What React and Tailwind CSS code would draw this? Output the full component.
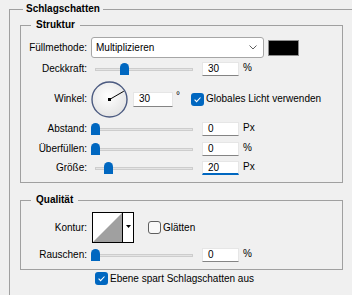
import React from "react";

const TRACK_START = 4;
const TRACK_W = 98;

const Thumb = () => (
  <svg width="9" height="12" viewBox="0 0 9 12" className="block">
    <path d="M0 4.5 A4.5 4.5 0 0 1 9 4.5 V12 H0 Z" fill="#0067c0" />
  </svg>
);

// pos = 0..1 along the track
const Slider = ({ pos }) => (
  <div className="relative w-[102px] h-[14px] flex items-center">
    <div className="ml-[4px] w-[98px] h-[3px] bg-[#e4e4e4] border border-[#cdcdcd]" />
    <div
      className="absolute top-[1px]"
      style={{ left: TRACK_START + pos * TRACK_W - 4.5 }}
    >
      <Thumb />
    </div>
  </div>
);

const NumBox = ({ value, focused, wide }) => (
  <div
    className={`${wide ? "w-[40px] h-[15px]" : "w-[37px] h-[14px]"} bg-white border border-[#e6e6e6] ${
      focused ? "border-b-2 border-b-[#0067c0]" : "border-b-[#848484]"
    } pl-[5px] flex items-center leading-none`}
  >
    {value}
  </div>
);

const Unit = ({ children }) => (
  <span className="ml-[4px] self-start leading-[12px]">{children}</span>
);

const Check = ({ checked }) =>
  checked ? (
    <div className="w-[13px] h-[13px] rounded-[3px] bg-[#0067c0] flex items-center justify-center shrink-0">
      <svg width="9" height="9" viewBox="0 0 9 9">
        <path d="M1.6 4.7 L3.6 6.7 L7.5 2.5" fill="none" stroke="#fff" strokeWidth="1.1" />
      </svg>
    </div>
  ) : (
    <div className="w-[13px] h-[13px] rounded-[3px] border border-[#5f5f5f] bg-[#f9f9f9] shrink-0" />
  );

const Row = ({ label, className, children }) => (
  <div className={`flex items-center ${className}`}>
    <div className="w-[66px] text-right whitespace-nowrap">{label}</div>
    <div className="ml-[4px] flex items-center">{children}</div>
  </div>
);

const SliderRow = ({ label, pos, value, unit, focused, className }) => (
  <Row label={label} className={className}>
    <Slider pos={pos} />
    <div className="ml-[9px] flex items-center">
      <NumBox value={value} focused={focused} />
      <Unit>{unit}</Unit>
    </div>
  </Row>
);

const Dial = () => {
  const a = (30 * Math.PI) / 180;
  return (
    <svg width="37" height="37" viewBox="0 0 37 37" className="block">
      <defs>
        <radialGradient id="dialFill" cx="45%" cy="40%" r="65%">
          <stop offset="0" stopColor="#ffffff" />
          <stop offset="1" stopColor="#e2e2e2" />
        </radialGradient>
      </defs>
      <circle cx="18.5" cy="18.5" r="17.5" fill="url(#dialFill)" stroke="#4b5a80" strokeWidth="1.4" />
      <line
        x1="18.5"
        y1="18.5"
        x2={18.5 + 16.5 * Math.cos(a)}
        y2={18.5 - 16.5 * Math.sin(a)}
        stroke="#000"
        strokeWidth="1"
      />
      <rect x="17" y="17" width="3" height="3" fill="#000" />
    </svg>
  );
};

const Contour = () => (
  <div className="ml-[1px] w-[42px] h-[31px] border border-black bg-white flex">
    <svg width="29" height="29" viewBox="0 0 29 29" className="block">
      <polygon points="0,29 29,0 29,29" fill="#a0a0a0" />
    </svg>
    <div className="w-[11px] border-l border-black flex items-center justify-center">
      <svg width="5" height="3" viewBox="0 0 5 3" className="block -mt-[2px]">
        <polygon points="0,0 5,0 2.5,3" fill="#000" />
      </svg>
    </div>
  </div>
);

export default function App() {
  return (
    <div className="w-[352px] h-[295px] overflow-hidden bg-[#f0f0f0] text-black text-[10px] leading-[12px] font-['Liberation_Sans',sans-serif] pt-[3px]">
      <fieldset className="ml-[9px] w-[400px] border border-[#a0a0a0] pl-[10px] pb-[20px]">
        <legend className="ml-[3px] px-[3px] font-bold">Schlagschatten</legend>

        <fieldset className="mt-[4px] w-[323px] border border-[#a0a0a0] pb-[7px]">
          <legend className="ml-[10px] px-[5px] font-bold">Struktur</legend>

          <Row label="Füllmethode:" className="mt-[6px] h-[21px]">
            <div className="w-[173px] h-[21px] bg-white border border-[#a6a6a6] rounded-[3px] flex items-center justify-between pl-[4px] pr-[6px]">
              <span>Multiplizieren</span>
              <svg width="8" height="5" viewBox="0 0 8 5" className="block">
                <path d="M0.5 0.5 L4 4 L7.5 0.5" fill="none" stroke="#606060" strokeWidth="1" />
              </svg>
            </div>
            <div className="ml-[4px] w-[31px] h-[16px] bg-black border border-[#8c8c8c]" />
          </Row>

          <SliderRow label="Deckkraft:" pos={0.3} value="30" unit="%" className="mt-[4px] h-[14px]" />

          <Row label="Winkel:" className="mt-[5px] h-[36px]">
            <Dial />
            <div className="ml-[5px] flex items-center">
              <NumBox value="30" wide />
              <span className="ml-[3px] self-start -mt-[2px]">°</span>
            </div>
            <div className="ml-[11px] flex items-center">
              <Check checked />
              <span className="ml-[2px] whitespace-nowrap">Globales Licht verwenden</span>
            </div>
          </Row>

          <SliderRow label="Abstand:" pos={0} value="0" unit="Px" className="mt-[5px] h-[14px]" />
          <SliderRow label="Überfüllen:" pos={0} value="0" unit="%" className="mt-[6px] h-[14px]" />
          <SliderRow label="Größe:" pos={0.14} value="20" unit="Px" focused className="mt-[5px] h-[14px]" />
        </fieldset>

        <fieldset className="mt-[11px] w-[323px] border border-[#a0a0a0] pb-[7px]">
          <legend className="ml-[10px] px-[5px] font-bold">Qualität</legend>

          <Row label="Kontur:" className="mt-[6px] h-[31px]">
            <Contour />
            <div className="ml-[14px] flex items-center">
              <Check />
              <span className="ml-[2px]">Glätten</span>
            </div>
          </Row>

          <SliderRow label="Rauschen:" pos={0} value="0" unit="%" className="mt-[5px] h-[14px]" />
        </fieldset>

        <div className="mt-[2px] ml-[75px] flex items-center">
          <Check checked />
          <span className="ml-[2px] whitespace-nowrap">Ebene spart Schlagschatten aus</span>
        </div>
      </fieldset>
    </div>
  );
}
